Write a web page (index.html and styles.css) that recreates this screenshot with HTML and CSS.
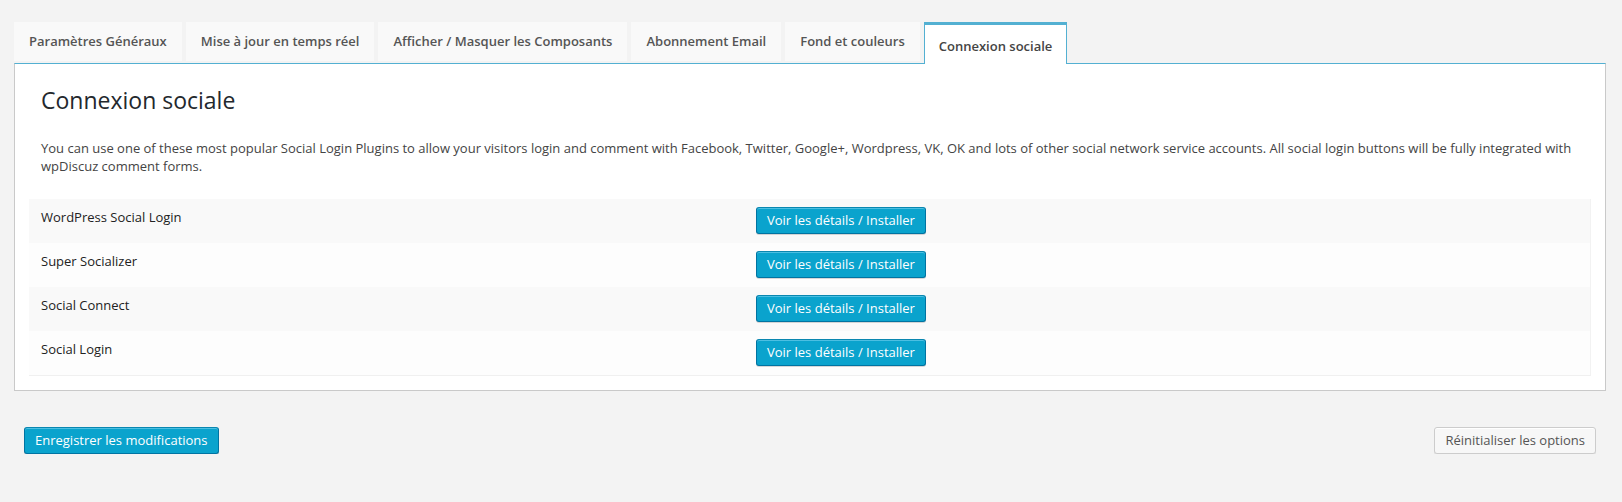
FILE: index.html
```html
<!DOCTYPE html>
<html lang="fr">
<head>
<meta charset="utf-8">
<title>Connexion sociale</title>
<link rel="stylesheet" href="styles.css">
</head>
<body>
<div class="wrap">
  <nav class="tabs">
    <div class="tab">Paramètres Généraux</div>
    <div class="tab">Mise à jour en temps réel</div>
    <div class="tab">Afficher / Masquer les Composants</div>
    <div class="tab">Abonnement Email</div>
    <div class="tab">Fond et couleurs</div>
    <div class="tab active">Connexion sociale</div>
  </nav>
  <section class="panel">
    <h2 class="title">Connexion sociale</h2>
    <p class="desc">You can use one of these most popular Social Login Plugins to allow your visitors login and comment with Facebook, Twitter, Google+, Wordpress, VK, OK and lots of other social network service accounts. All social login buttons will be fully integrated with wpDiscuz comment forms.</p>
    <div class="plugins">
      <div class="row">
        <div class="name">WordPress Social Login</div>
        <div class="action"><button class="btn primary">Voir les détails / Installer</button></div>
      </div>
      <div class="row">
        <div class="name">Super Socializer</div>
        <div class="action"><button class="btn primary">Voir les détails / Installer</button></div>
      </div>
      <div class="row">
        <div class="name">Social Connect</div>
        <div class="action"><button class="btn primary">Voir les détails / Installer</button></div>
      </div>
      <div class="row">
        <div class="name">Social Login</div>
        <div class="action"><button class="btn primary">Voir les détails / Installer</button></div>
      </div>
    </div>
  </section>
  <div class="footer">
    <button class="btn primary">Enregistrer les modifications</button>
    <button class="btn secondary">Réinitialiser les options</button>
  </div>
</div>
</body>
</html>
```

FILE: styles.css
```css
html, body {
  margin: 0;
  padding: 0;
  background: #f3f3f3;
}
body {
  font-family: "Open Sans", "Liberation Sans", sans-serif;
  font-size: 13px;
  line-height: 18px;
  color: #444;
}
.wrap {
  padding: 22px 16px 0 14px;
}
.tabs {
  display: flex;
  gap: 4px;
  align-items: flex-start;
  height: 42px;
  margin-bottom: -1px;
  position: relative;
  z-index: 2;
}
.tab {
  background: #f9f9f9;
  color: #555;
  font-weight: 600;
  line-height: 19px;
  padding: 10px 15px;
  white-space: nowrap;
}
.tab.active {
  background: #fff;
  color: #444;
  border-top: 3px solid #53b0d2;
  border-left: 1px solid #53b0d2;
  border-right: 1px solid #53b0d2;
  padding: 12px 14px 8px;
}
.panel {
  background: #fff;
  border: 1px solid #c9c9c9;
  border-top: 1px solid #53b0d2;
  padding: 0 14px 14px;
}
.title {
  margin: 0;
  padding: 21px 12px 0;
  font-size: 23px;
  font-weight: 400;
  line-height: 30px;
  color: #23282d;
}
.desc {
  margin: 24px 0 0;
  padding: 0 12px;
  color: #444;
}
.plugins {
  margin-top: 24px;
  border-right: 1px solid #f2f2f2;
  border-bottom: 1px solid #f0f0f0;
}
.row {
  display: grid;
  grid-template-columns: 715px 1fr;
  height: 44px;
  align-items: start;
  background: #fdfdfd;
}
.row:nth-child(odd) {
  background: #f9f9f9;
}
.name {
  padding: 9px 12px 0;
  color: #222;
}
.action {
  padding: 8px 12px 0;
}
.btn {
  font-family: "Open Sans", "Liberation Sans", sans-serif;
  font-size: 13px;
  height: 27px;
  line-height: 25px;
  padding: 0 10px;
  border-radius: 3px;
  border: 1px solid;
  cursor: pointer;
  white-space: nowrap;
}
.btn.primary {
  background: #0aa3cd;
  border-color: #0a87b0 #0074a2 #0074a2;
  color: #fff;
  box-shadow: inset 0 1px 0 rgba(120, 210, 240, 0.6), 0 1px 0 rgba(0, 0, 0, 0.15);
}
.btn.secondary {
  background: #f7f7f7;
  border-color: #ccc;
  color: #555;
  box-shadow: inset 0 1px 0 #fff, 0 1px 0 rgba(0, 0, 0, 0.08);
}
.footer {
  display: flex;
  justify-content: space-between;
  align-items: center;
  margin-top: 36px;
  padding: 0 10px;
}
```
